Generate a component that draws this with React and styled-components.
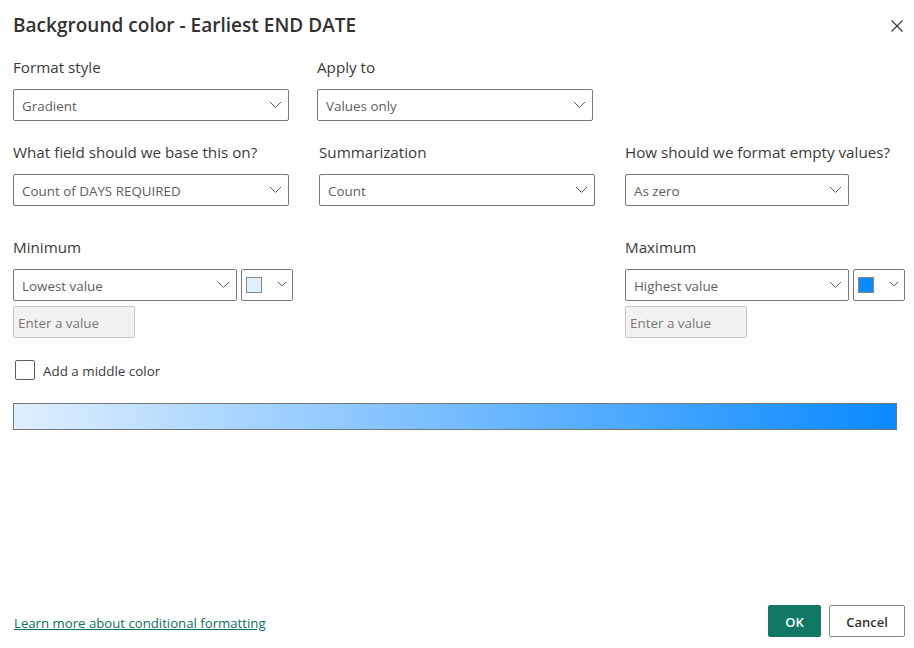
import React from "react";
import styled, { createGlobalStyle } from "styled-components";

const Global = createGlobalStyle`
  html, body { margin: 0; padding: 0; background: #fff; }
  body { font-family: "Open Sans", "Noto Sans", "Liberation Sans", sans-serif; color: #323130; }
`;

const Dialog = styled.div`
  width: 914px; height: 648px; box-sizing: border-box;
  padding: 0 9px 11px 13px; display: flex; flex-direction: column; overflow: hidden;
`;
const Header = styled.header`
  height: 50px; display: flex; align-items: center; justify-content: space-between;
  padding-right: 1px;
`;
const Title = styled.h1`
  margin: 0; font-size: 19px; font-weight: 600; color: #323130; line-height: 24px; letter-spacing: 0.02px;
`;
const Close = styled.button`
  width: 14px; height: 14px; padding: 0; border: 0; background: none; display: flex; margin-top: 2px;
`;
const Row = styled.section`
  display: flex; margin-top: ${(p) => p.$top}px;
`;
const Field = styled.div`
  width: ${(p) => p.$w}px; margin-left: ${(p) => p.$left || 0}px; flex: none;
`;
const Label = styled.div`
  font-size: 15.2px; line-height: 18px; height: 20px; color: #3b3a39; white-space: nowrap; margin-bottom: 11px;
`;
const Select = styled.div`
  box-sizing: border-box; width: ${(p) => p.$w || "100%"}; height: 32px;
  border: 1px solid #7a7876; border-radius: 2px; display: flex; align-items: center;
  justify-content: space-between; padding: 2px 6px 0 8px; font-size: 13.4px; color: #605e5c; background: #fff;
  white-space: nowrap;
`;
const Chevron = styled.svg`
  width: 13px; height: 8px; flex: none; margin-bottom: 2px;
`;
const Controls = styled.div`
  display: flex; gap: 4px;
`;
const Picker = styled.div`
  box-sizing: border-box; width: 52px; height: 32px; border: 1px solid #7a7876; border-radius: 2px;
  display: flex; justify-content: space-between; padding: 7px 5px 0 4px;
`;
const Swatch = styled.span`
  box-sizing: border-box; width: 16px; height: 16px; border: 1px solid #8a8886; background: ${(p) => p.$color};
`;
const PickerChevron = styled(Chevron)`
  width: 10px; height: 6px; margin: 4px 0 0;
`;
const ValueInput = styled.div`
  box-sizing: border-box; width: 122px; height: 32px; margin-top: 5px; background: #f3f2f1;
  border: 1px solid #c8c6c4; border-radius: 2px; padding: 2px 4px 0; display: flex; align-items: center;
  font-size: 13.4px; color: #797775; white-space: nowrap;
`;
const CheckRow = styled.label`
  display: flex; align-items: center; gap: 8px; margin: 22px 0 0 2px; font-size: 13.4px; color: #3b3a39;
`;
const CheckText = styled.span`
  padding-top: 2px;
`;
const CheckBox = styled.span`
  box-sizing: border-box; width: 20px; height: 20px; border: 1px solid #605e5c; border-radius: 2px; background: #fff;
`;
const GradientBar = styled.div`
  box-sizing: border-box; width: 884px; height: 27px; margin-top: 23px; border: 1px solid #767676;
  background: linear-gradient(to right, #dfeffe, #0a8aff);
`;
const Footer = styled.footer`
  margin-top: auto; display: flex; align-items: center; gap: 8px;
`;
const LearnLink = styled.a`
  margin-right: auto; margin-left: 1px; font-size: 13.2px; color: #0f6f5e; text-decoration: underline; margin-top: 4px;
`;
const Button = styled.button`
  box-sizing: border-box; height: 32px; width: ${(p) => p.$w}px; border-radius: 2px; padding: 1px 0 0;
  font-family: inherit; font-size: 13px; font-weight: 600;
  border: 1px solid ${(p) => (p.$primary ? "#117865" : "#8a8886")};
  background: ${(p) => (p.$primary ? "#117865" : "#fff")};
  color: ${(p) => (p.$primary ? "#fff" : "#323130")};
`;

const Down = ({ as: C = Chevron }) => (
  <C viewBox="0 0 13 8" fill="none" preserveAspectRatio="none">
    <path d="M1 1l5.5 5.5L12 1" stroke="#605e5c" strokeWidth="1" vectorEffect="non-scaling-stroke" />
  </C>
);

const Drop = ({ text, w }) => (
  <Select $w={w}>{text}<Down /></Select>
);

const ColorControl = ({ text, color }) => (
  <>
    <Controls>
      <Drop text={text} w="224px" />
      <Picker><Swatch $color={color} /><Down as={PickerChevron} /></Picker>
    </Controls>
    <ValueInput>Enter a value</ValueInput>
  </>
);

export default function App() {
  return (
    <Dialog>
      <Global />
      <Header>
        <Title>Background color - Earliest END DATE</Title>
        <Close aria-label="Close">
          <svg width="14" height="14" viewBox="0 0 14 14" fill="none"><path d="M1.5 1.5l11 11M12.5 1.5l-11 11" stroke="#323130" strokeWidth="1.1" /></svg>
        </Close>
      </Header>
      <Row $top={8}>
        <Field $w={276}><Label>Format style</Label><Drop text="Gradient" /></Field>
        <Field $w={276} $left={28}><Label>Apply to</Label><Drop text="Values only" /></Field>
      </Row>
      <Row $top={22}>
        <Field $w={276}><Label>What field should we base this on?</Label><Drop text="Count of DAYS REQUIRED" /></Field>
        <Field $w={276} $left={30}><Label>Summarization</Label><Drop text="Count" /></Field>
        <Field $w={224} $left={30}><Label>How should we format empty values?</Label><Drop text="As zero" /></Field>
      </Row>
      <Row $top={32}>
        <Field $w={280}><Label>Minimum</Label><ColorControl text="Lowest value" color="#deeffe" /></Field>
        <Field $w={280} $left={332}><Label>Maximum</Label><ColorControl text="Highest value" color="#0a8aff" /></Field>
      </Row>
      <CheckRow><CheckBox /><CheckText>Add a middle color</CheckText></CheckRow>
      <GradientBar />
      <Footer>
        <LearnLink href="#">Learn more about conditional formatting</LearnLink>
        <Button $primary $w={53}>OK</Button>
        <Button $w={76}>Cancel</Button>
      </Footer>
    </Dialog>
  );
}
